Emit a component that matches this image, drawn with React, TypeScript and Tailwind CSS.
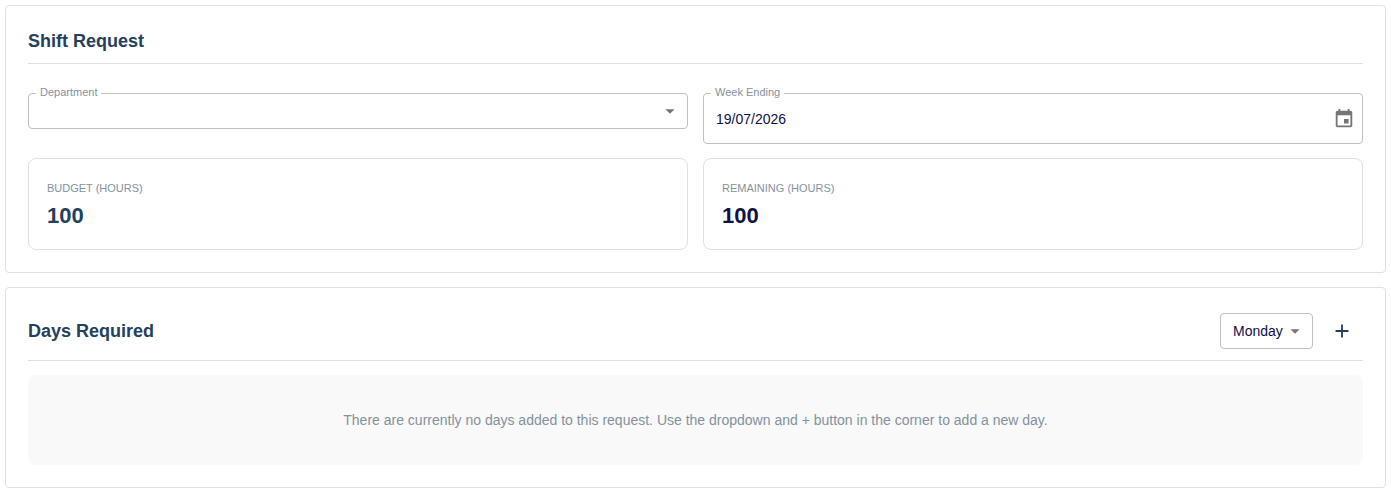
import { useState } from "react";
import type { ReactNode } from "react";

const DAYS = ["Monday", "Tuesday", "Wednesday", "Thursday", "Friday", "Saturday", "Sunday"];

const ICONS = {
  arrow: "M7 10l5 5 5-5z",
  add: "M19 13h-6v6h-2v-6H5v-2h6V5h2v6h6v2z",
  event:
    "M17 12h-5v5h5v-5zM16 1v2H8V1H6v2H5c-1.11 0-1.99.9-1.99 2L3 19c0 1.1.89 2 2 2h14c1.1 0 2-.9 2-2V5c0-1.1-.9-2-2-2h-1V1h-2zm3 18H5V8h14v11z",
};

function Icon({ path }: { path: string }) {
  return (
    <svg viewBox="0 0 24 24" width={22} height={22} fill="currentColor" aria-hidden="true">
      <path d={path} />
    </svg>
  );
}

function Card({ children }: { children: ReactNode }) {
  return <section className="rounded border border-[#e0e0e0] bg-white p-[22px]">{children}</section>;
}

function FieldLabel({ htmlFor, children }: { htmlFor: string; children: ReactNode }) {
  return (
    <label
      htmlFor={htmlFor}
      className="absolute -top-2 left-2 bg-white px-1 text-[11px] leading-[14px] text-[#8492a0]"
    >
      {children}
    </label>
  );
}

function Stat({ label, value, valueClass }: { label: string; value: number; valueClass: string }) {
  return (
    <div className="rounded-lg border border-[#e0e0e0] px-[18px] py-[17px]">
      <p className="text-[11px] leading-6 text-[#8492a0] uppercase">{label}</p>
      <p className={`text-[22px] leading-8 font-bold ${valueClass}`}>{value}</p>
    </div>
  );
}

export default function App() {
  const [department, setDepartment] = useState("");
  const [weekEnding, setWeekEnding] = useState("19/07/2026");
  const [day, setDay] = useState("Monday");

  return (
    <main className="flex flex-col gap-[14px] p-[5px] font-['Liberation_Sans',Arial,sans-serif] text-sm text-[#10104a]">
      <Card>
        <h2 className="border-b border-[#e0e0e0] pb-2 text-lg leading-[27px] font-bold text-[#24405c]">
          Shift Request
        </h2>

        <div className="mt-[29px] grid grid-cols-2 items-start gap-x-[15px] gap-y-[14px]">
          {/* Department */}
          <div className="relative">
            <select
              id="department"
              value={department}
              onChange={(e) => setDepartment(e.target.value)}
              className="block h-9 w-full appearance-none rounded border border-[#c0c0c0] bg-white px-3"
            >
              <option value=""></option>
            </select>
            <FieldLabel htmlFor="department">Department</FieldLabel>
            <span className="pointer-events-none absolute inset-y-0 right-[7px] flex items-center text-[#757575]">
              <Icon path={ICONS.arrow} />
            </span>
          </div>

          {/* Week ending */}
          <div className="relative">
            <input
              id="week-ending"
              type="text"
              value={weekEnding}
              onChange={(e) => setWeekEnding(e.target.value)}
              className="block h-[51px] w-full rounded border border-[#c0c0c0] pr-10 pl-3"
            />
            <FieldLabel htmlFor="week-ending">Week Ending</FieldLabel>
            <button
              type="button"
              aria-label="Choose date"
              className="absolute inset-y-0 right-2 flex items-center text-[#757575]"
            >
              <Icon path={ICONS.event} />
            </button>
          </div>

          <Stat label="Budget (hours)" value={100} valueClass="text-[#24405c]" />
          <Stat label="Remaining (hours)" value={100} valueClass="text-[#10104a]" />
        </div>
      </Card>

      <Card>
        <div className="flex items-center justify-between border-b border-[#e0e0e0] pb-2">
          <h2 className="text-lg leading-[27px] font-bold text-[#24405c]">Days Required</h2>

          <div className="flex items-center gap-2">
            <div className="relative">
              <select
                aria-label="Day"
                value={day}
                onChange={(e) => setDay(e.target.value)}
                className="block h-9 w-[93px] appearance-none rounded border border-[#c0c0c0] bg-white pl-3"
              >
                {DAYS.map((d) => (
                  <option key={d} value={d}>
                    {d}
                  </option>
                ))}
              </select>
              <span className="pointer-events-none absolute inset-y-0 right-[7px] flex items-center text-[#757575]">
                <Icon path={ICONS.arrow} />
              </span>
            </div>
            <button
              type="button"
              aria-label="Add day"
              className="flex size-[42px] items-center justify-center rounded-full text-[#24405c]"
            >
              <Icon path={ICONS.add} />
            </button>
          </div>
        </div>

        {/* Empty state */}
        <div className="mt-[14px] rounded-lg bg-[#f9f9f9] px-4 py-[34px] text-center leading-[22px] text-[#8492a0]">
          There are currently no days added to this request. Use the dropdown and + button in the corner to add a
          new day.
        </div>
      </Card>
    </main>
  );
}
